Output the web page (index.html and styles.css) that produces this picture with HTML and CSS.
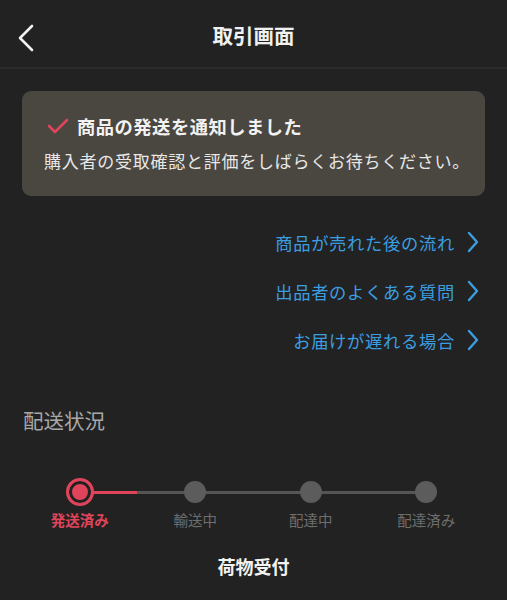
FILE: index.html
```html
<!DOCTYPE html>
<html lang="ja">
<head>
<meta charset="utf-8">
<link rel="stylesheet" href="styles.css">
</head>
<body>
<div class="page">
  <header class="header">
    <svg class="back" width="18" height="28" viewBox="0 0 18 28"><path d="M15 2 L3 14 L15 26" fill="none" stroke="#f2f2f2" stroke-width="2.6" stroke-linecap="round" stroke-linejoin="round"/></svg>
    <h1 class="title">取引画面</h1>
  </header>
  <main class="content">
    <section class="notice">
      <div class="notice-head">
        <svg class="check" width="22" height="16" viewBox="0 0 22 16"><path d="M2 8 L8 14 L20 2" fill="none" stroke="#e0445a" stroke-width="2.6" stroke-linecap="round" stroke-linejoin="round"/></svg>
        <span class="notice-title">商品の発送を通知しました</span>
      </div>
      <p class="notice-body">購入者の受取確認と評価をしばらくお待ちください。</p>
    </section>
    <nav class="links">
      <a class="link"><span>商品が売れた後の流れ</span><svg class="chev" width="12" height="22" viewBox="0 0 12 22"><path d="M2 2 L10 11 L2 20" fill="none" stroke="#3b9ee0" stroke-width="2.4" stroke-linecap="round" stroke-linejoin="round"/></svg></a>
      <a class="link"><span>出品者のよくある質問</span><svg class="chev" width="12" height="22" viewBox="0 0 12 22"><path d="M2 2 L10 11 L2 20" fill="none" stroke="#3b9ee0" stroke-width="2.4" stroke-linecap="round" stroke-linejoin="round"/></svg></a>
      <a class="link"><span>お届けが遅れる場合</span><svg class="chev" width="12" height="22" viewBox="0 0 12 22"><path d="M2 2 L10 11 L2 20" fill="none" stroke="#3b9ee0" stroke-width="2.4" stroke-linecap="round" stroke-linejoin="round"/></svg></a>
    </nav>
    <h2 class="section-title">配送状況</h2>
    <div class="stepper">
      <div class="track"><div class="track-fill"></div></div>
      <div class="step active"><div class="dot"></div><span class="label">発送済み</span></div>
      <div class="step"><div class="dot"></div><span class="label">輸送中</span></div>
      <div class="step"><div class="dot"></div><span class="label">配達中</span></div>
      <div class="step"><div class="dot"></div><span class="label">配達済み</span></div>
    </div>
    <p class="status">荷物受付</p>
  </main>
</div>
</body>
</html>
```
FILE: styles.css
```css
* { box-sizing: border-box; }
html, body {
  margin: 0;
  padding: 0;
  background: #222222;
  font-family: "Noto Sans CJK JP", "Noto Sans", sans-serif;
  color: #eeeeee;
}
.page {
  width: 507px;
  height: 600px;
  overflow: hidden;
  background: #222222;
}
.header {
  position: relative;
  height: 69px;
  border-bottom: 2px solid #2c2c2c;
  display: flex;
  align-items: center;
  justify-content: center;
}
.back {
  position: absolute;
  left: 17px;
  top: 24px;
}
.title {
  margin: 0;
  font-size: 20.5px;
  font-weight: 700;
  color: #f0f0f0;
  padding-top: 2px;
}
.content {
  padding: 22px 22px 0 22px;
}
.notice {
  background: #4a4640;
  border-radius: 9px;
  height: 105px;
  padding: 22px 10px 0 22px;
}
.notice-head {
  display: flex;
  align-items: center;
  gap: 8px;
  height: 26px;
}
.check { margin-left: 3px; }
.notice-title {
  font-size: 18.3px;
  font-weight: 700;
  color: #f2f2f2;
  letter-spacing: 0.5px;
}
.notice-body {
  margin: 10px 0 0 0;
  font-size: 17px;
  color: #e8e8e8;
  line-height: 24px;
  white-space: nowrap;
  letter-spacing: 0.75px;
}
.links {
  display: flex;
  flex-direction: column;
  align-items: flex-end;
  margin-top: 34px;
  padding-right: 6px;
  gap: 25px;
}
.link {
  display: flex;
  align-items: center;
  gap: 12px;
  height: 24px;
  color: #3b9ee0;
  font-size: 17.3px;
  letter-spacing: 0.7px;
}
.section-title {
  margin: 55px 0 0 1px;
  font-size: 20.5px;
  font-weight: 400;
  color: #a8a8a8;
  line-height: 26px;
}
.stepper {
  position: relative;
  display: grid;
  grid-template-columns: repeat(4, 115.5px);
  margin: 41px 0 0 0;
}
.track {
  position: absolute;
  left: 57px;
  top: 17px;
  width: 347px;
  height: 3px;
  background: #555555;
}
.track-fill {
  width: 58px;
  height: 3px;
  background: #e0445a;
}
.step {
  position: relative;
  display: flex;
  flex-direction: column;
  align-items: center;
}
.dot {
  width: 22px;
  height: 22px;
  margin-top: 7px;
  border-radius: 50%;
  background: #5c5c5c;
}
.step.active .dot {
  width: 28px;
  height: 28px;
  margin-top: 4px;
  margin-bottom: -3px;
  background: #e0445a;
  border: 3px solid #e0445a;
  box-shadow: inset 0 0 0 3px #222222;
}
.label {
  margin-top: 7px;
  font-size: 14.5px;
  color: #6e6e6e;
  line-height: 20px;
}
.step.active .label {
  color: #e0445a;
  font-weight: 700;
}
.status {
  margin: 23px 0 0 0;
  text-align: center;
  font-size: 18px;
  font-weight: 700;
  color: #f2f2f2;
}
```
